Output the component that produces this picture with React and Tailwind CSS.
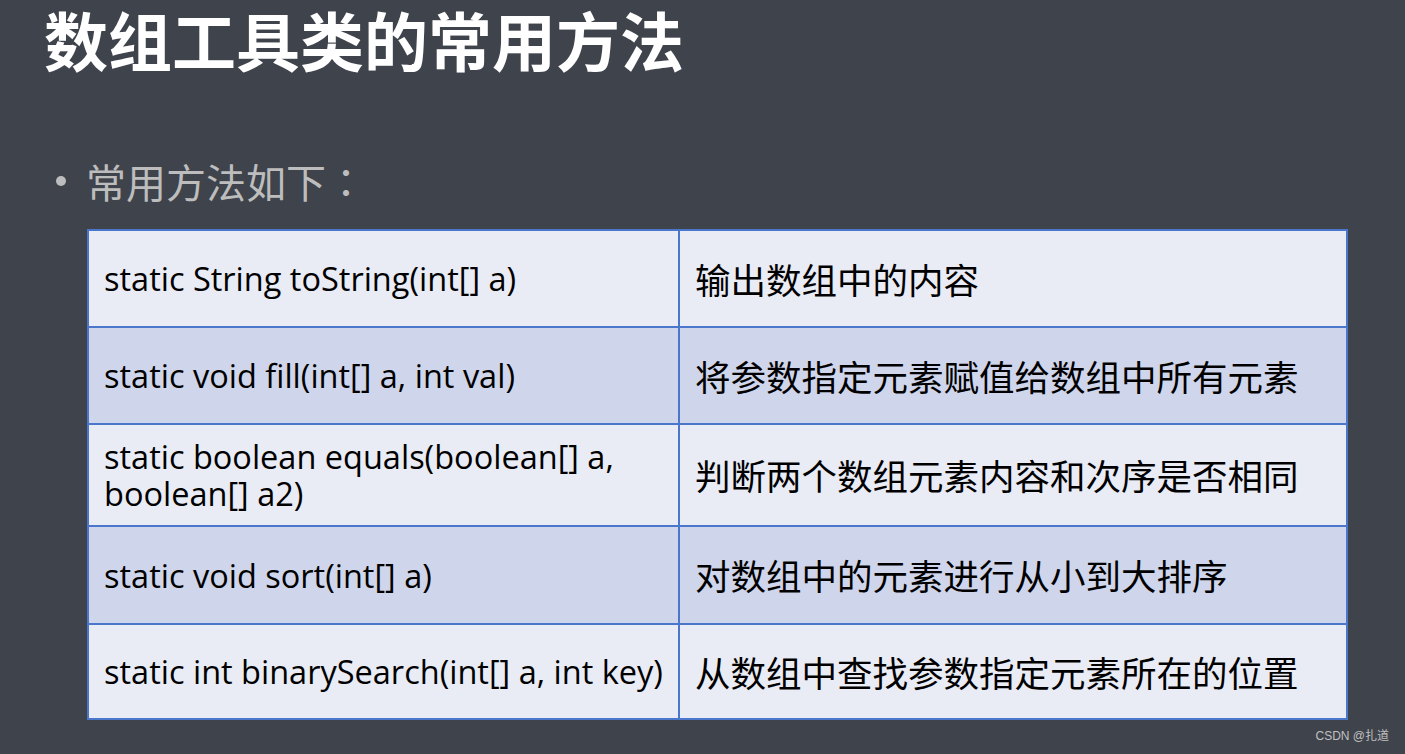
import React from "react";

const rows = [
  { sig: "static String toString(int[] a)", desc: "输出数组中的内容", h: "h-[95px]" },
  { sig: "static void fill(int[] a, int val)", desc: "将参数指定元素赋值给数组中所有元素", h: "h-[97px]" },
  { sig: "static boolean equals(boolean[] a, boolean[] a2)", desc: "判断两个数组元素内容和次序是否相同", h: "h-[102px]" },
  { sig: "static void sort(int[] a)", desc: "对数组中的元素进行从小到大排序", h: "h-[98px]" },
  { sig: "static int binarySearch(int[] a, int key)", desc: "从数组中查找参数指定元素所在的位置", h: "h-[95px]" },
];

export default function App() {
  return (
    <div className="w-[1405px] h-[754px] overflow-hidden bg-[#3f434c] relative font-['Noto_Sans_CJK_SC',sans-serif]">
      {/* title */}
      <h1 className="pl-[44px] text-[64px] leading-[76px] font-bold text-white">
        数组工具类的常用方法
      </h1>

      {/* bullet line */}
      <div className="flex items-center mt-[79px] pl-[56px] h-[52px] text-[40px] leading-[52px] text-[#bdbdbd]">
        <span className="w-[10px] h-[10px] rounded-full bg-[#bdbdbd] mr-[20px]" />
        <span>常用方法如下</span>
        <span className="font-['Noto_Sans_CJK_TC',sans-serif]">：</span>
      </div>

      {/* table */}
      <div className="ml-[87px] mt-[22px] w-[1261px] border-2 border-[#4a77cc]">
        {rows.map((r, i) => (
          <div
            key={i}
            className={`flex ${r.h} ${i > 0 ? "border-t-2 border-[#4a77cc]" : ""} ${
              i % 2 === 0 ? "bg-[#e9ebf5]" : "bg-[#cfd5ea]"
            }`}
          >
            <div className="w-[591px] shrink-0 flex items-center pl-[15px] pr-[6px] border-r-2 border-[#4a77cc] text-[32.5px] leading-[37px] text-black font-['Open_Sans','Noto_Sans_CJK_SC',sans-serif]">
              {r.sig}
            </div>
            <div className="flex-1 flex items-center pl-[15px] text-[35.5px] text-black">
              {r.desc}
            </div>
          </div>
        ))}
      </div>

      <div className="absolute right-[16px] bottom-[9px] text-[12px] text-[#c0c0c0] font-['Liberation_Sans','Noto_Sans_CJK_SC',sans-serif]">
        CSDN @扎道
      </div>
    </div>
  );
}
